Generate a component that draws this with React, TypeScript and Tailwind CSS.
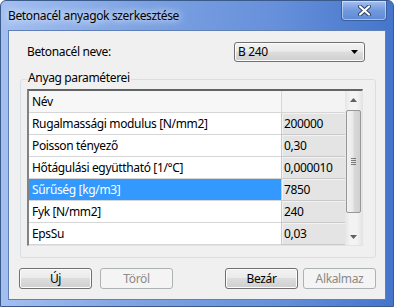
const rows: { name: string; value: string; selected?: boolean }[] = [
  { name: "Rugalmassági modulus [N/mm2]", value: "200000" },
  { name: "Poisson tényező", value: "0,30" },
  { name: "Hőtágulási együttható [1/°C]", value: "0,000010" },
  { name: "Sűrűség [kg/m3]", value: "7850", selected: true },
  { name: "Fyk [N/mm2]", value: "240" },
  { name: "EpsSu", value: "0,03" },
];

const Btn = ({ label, disabled }: { label: string; disabled?: boolean }) => (
  <div
    className={
      disabled
        ? "flex h-[21px] w-[73px] items-center justify-center rounded-[3px] border border-[#adb2b5] bg-[#f4f4f4] text-[#8a8a8a]"
        : "flex h-[21px] w-[73px] items-center justify-center rounded-[3px] border border-[#707070] bg-[linear-gradient(to_bottom,#f2f2f2_0%,#ebebeb_45%,#dddddd_50%,#cfcfcf_100%)] text-black shadow-[inset_0_0_0_1px_#fcfcfc]"
    }
  >
    {label}
  </div>
);

const App = () => {
  return (
    <div className="h-[307px] w-[394px] overflow-hidden bg-white">
      <div className="flex h-[307px] w-[394px] flex-col rounded-t-[6px] border border-[#3b5a8c] bg-[linear-gradient(to_right,#a3bff0_0%,#7ea3e3_35%,#6690da_70%,#4575cc_100%)] font-['Noto_Sans',sans-serif] text-[12px] leading-none tracking-[-0.35px] text-black">
        {/* title bar */}
        <div className="flex h-[29px] shrink-0 items-start justify-between pl-[7px] pr-[6px]">
          <span className="mt-[9px] [text-shadow:0_0_6px_#dfe9fb,0_0_10px_#dfe9fb]">Betonacél anyagok szerkesztése</span>
          <div className="flex h-[20px] w-[46px] items-center justify-center rounded-b-[4px] border border-t-0 border-[#3a5f9e] bg-[linear-gradient(to_bottom,#a4c0ef,#7199dd_50%,#5d89d6)] shadow-[inset_0_0_0_1px_rgba(255,255,255,0.45)]">
            <svg width="13" height="11" viewBox="0 0 13 11">
              <path d="M2 1.5 L11 9.5 M11 1.5 L2 9.5" stroke="#2e3f5e" strokeWidth="4" strokeLinecap="round" />
              <path d="M2 1.5 L11 9.5 M11 1.5 L2 9.5" stroke="#ffffff" strokeWidth="2.2" strokeLinecap="round" />
            </svg>
          </div>
        </div>

        {/* client area */}
        <div className="mx-[7px] mb-[6px] flex flex-1 flex-col border border-[#5f7fb5] bg-[#f0f0f0]">
          <div className="mt-[11px] flex h-[20px] items-center pl-[18px] pr-[20px]">
            <span>Betonacél neve:</span>
            <div className="ml-auto flex h-[20px] w-[131px] items-center justify-between rounded-[3px] border border-[#707070] bg-[linear-gradient(to_bottom,#f2f2f2_0%,#ebebeb_45%,#dddddd_50%,#cfcfcf_100%)] pl-[3px] pr-[6px] shadow-[inset_0_0_0_1px_#fcfcfc]">
              <span>B 240</span>
              <svg width="7" height="4" viewBox="0 0 7 4">
                <path d="M0 0 H7 L3.5 4 Z" fill="#000" />
              </svg>
            </div>
          </div>

          {/* group box */}
          <div className="relative ml-[11px] mr-[9px] mt-[17px] h-[179px] rounded-[3px] border border-[#d5dfe5] pl-[6px] pr-[12px] pt-[9px]">
            <span className="absolute left-[6px] top-[-8px] bg-[#f0f0f0] px-[1px]">Anyag paraméterei</span>

            <div className="flex border-b border-l-2 border-r border-t-2 border-b-[#e3e3e3] border-l-[#828282] border-r-[#e3e3e3] border-t-[#646464]">
              <div className="flex flex-1 flex-col">
                <div className="flex h-[22px]">
                  <div className="flex flex-1 items-center border-b border-[#d6d6d6] bg-[#f7f7f7] pl-[3px]">Név</div>
                  <div className="w-[64px] border-b border-l border-[#d6d6d6] bg-[#f3f3f3]" />
                </div>
                {rows.map((r) => (
                  <div key={r.name} className="flex h-[22px]">
                    <div
                      className={
                        r.selected
                          ? "flex flex-1 items-center border-b border-[#d6d6d6] bg-[#3399ff] pl-[3px] text-white"
                          : "flex flex-1 items-center border-b border-[#d6d6d6] bg-white pl-[3px]"
                      }
                    >
                      {r.name}
                    </div>
                    <div className="flex w-[64px] items-center border-b border-l border-b-[#c9c9c9] border-l-[#c9c9c9] bg-[#e4e4e4] pl-[2px] shadow-[inset_1px_1px_0_#f2f2f2]">
                      {r.value}
                    </div>
                  </div>
                ))}
              </div>

              {/* scrollbar */}
              <div className="flex w-[17px] flex-col bg-[linear-gradient(to_right,#e5e5e5,#f3f3f3_30%,#f3f3f3_70%,#e5e5e5)]">
                <div className="flex h-[17px] items-center justify-center">
                  <svg width="7" height="4" viewBox="0 0 7 4">
                    <path d="M3.5 0 L7 4 H0 Z" fill="#606060" />
                  </svg>
                </div>
                <div className="mx-[1px] mt-[2px] flex h-[103px] items-center justify-center rounded-[2px] border border-[#979797] bg-[linear-gradient(to_right,#f2f2f2,#eaeaea_45%,#d9d9d9_55%,#d0d0d0)]">
                  <div className="flex flex-col gap-[1px]">
                    <div className="h-px w-[5px] bg-[#7a7a7a]" />
                    <div className="h-px w-[5px] bg-[#7a7a7a]" />
                    <div className="h-px w-[5px] bg-[#7a7a7a]" />
                    <div className="h-px w-[5px] bg-[#7a7a7a]" />
                  </div>
                </div>
                <div className="flex-1" />
                <div className="flex h-[17px] items-center justify-center">
                  <svg width="7" height="4" viewBox="0 0 7 4">
                    <path d="M0 0 H7 L3.5 4 Z" fill="#606060" />
                  </svg>
                </div>
              </div>
            </div>
          </div>

          {/* buttons */}
          <div className="mt-[10px] flex pl-[10px] pr-[9px]">
            <div className="flex gap-[8px]">
              <Btn label="Új" />
              <Btn label="Töröl" disabled />
            </div>
            <div className="ml-auto flex gap-[5px]">
              <Btn label="Bezár" />
              <Btn label="Alkalmaz" disabled />
            </div>
          </div>
        </div>
      </div>
    </div>
  );
};

export default App;
